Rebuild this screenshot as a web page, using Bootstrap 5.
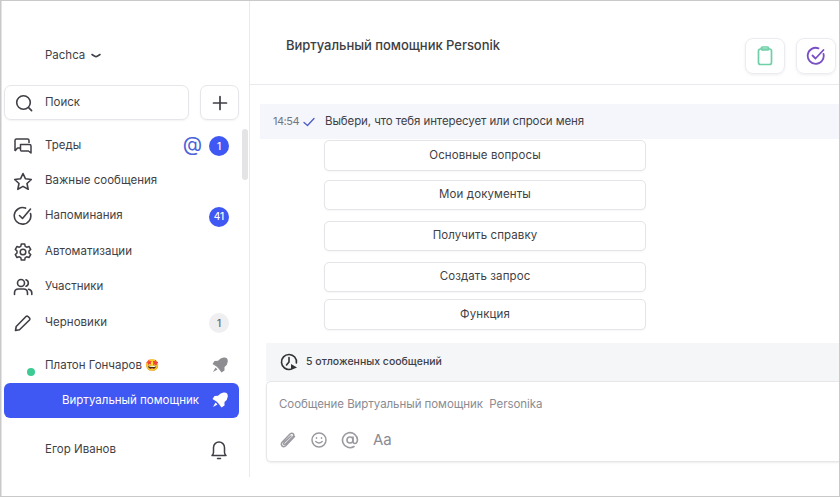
<!DOCTYPE html>
<html lang="ru">
<head>
<meta charset="utf-8">
<title>Pachca</title>
<link href="https://cdn.jsdelivr.net/npm/bootstrap@5.3.0/dist/css/bootstrap.min.css" rel="stylesheet">
<style>
html,body{height:497px;overflow:hidden;background:#fff}
body{font-family:Inter,"Liberation Sans",sans-serif;color:#3f3f46;font-size:12px}
.frame{width:840px;height:497px;border:1px solid #c9c9c9;box-shadow:inset 1px 0 0 #e4e4e4;overflow:hidden}
.side{width:249px;height:476px;border-right:1px solid #e9e9ee;flex:none;padding:0 10px 0 3px;position:relative}
.org{height:84px;padding:46px 0 0 41px;font-size:11.5px;line-height:16px}
.chev{margin:4px 0 0 5px}
.search-box{width:185px;height:35px;border:1px solid #e6e6ea;border-radius:7px;box-shadow:0 1px 2px rgba(0,0,0,.05);font-size:11.5px}
.ico-slot{width:38px;margin-right:3px;flex:none;display:flex;justify-content:center}
.search-box .ico-slot{margin-right:2px}
.add-btn{width:39px;height:35px;border:1px solid #e6e6ea;border-radius:7px;box-shadow:0 1px 2px rgba(0,0,0,.05);margin-left:11px}
.tools{margin-bottom:8px}
.nav-line{height:35.4px;font-size:11.5px;letter-spacing:.02px;padding-right:10px}
.nav-line .lbl{flex:1;margin-top:-1px}
.cnt{width:20px;height:20px;border-radius:50%;background:#3f57f3;color:#fff;font-size:10px;font-weight:500;display:flex;align-items:center;justify-content:center;margin-top:1px}
.cnt.gray{background:#efeff2;color:#666}
.at{color:#4a63d8;font-size:20px;line-height:20px;margin:-3px 7px 0 0;font-weight:400}
.people{margin-top:7px}
.people .lbl{margin-top:1px}
.active-row{height:35px;background:#3f57f3;color:#fff;border-radius:6px;font-size:11.5px;letter-spacing:0;padding-right:10px}
.active-row .lbl{margin:1px 0 0 58px}
.online{position:absolute;left:26px;top:367px;width:8px;height:8px;border-radius:50%;background:#3ecb93}
.main-col{flex:1;min-width:0}
.head{height:84px;border-bottom:1px solid #e9e9ee;padding:36px 3px 0 36px}
.head .ttl{font-size:13px;line-height:18px;font-weight:500;letter-spacing:-.03px;color:#3d3d42;margin-top:-1px;flex:1}
.sq{width:40px;height:36px;border:1px solid #ececf0;border-radius:8px;box-shadow:0 1px 3px rgba(0,0,0,.07);margin-left:11px;margin-top:1px}
.msg{margin:19px 0 0 10px;height:35px;background:#f5f6fb;padding-left:13px;font-size:11.5px;letter-spacing:-.1px}
.tm{color:#75757d;font-size:11px;letter-spacing:-.5px}
.msg svg{margin:0 10px 0 4px}
.opts{margin:1px 0 0 74px;width:322px;color:#3f3f46}
.opt{display:block;width:100%;height:31px;border:1px solid #e4e4e9;border-radius:5px;background:#fff;font-size:11.5px;text-align:center;box-shadow:0 1px 2px rgba(0,0,0,.04);padding:0;color:inherit;letter-spacing:.1px}
.opt-s{height:30px}
.gap-9{margin-top:9px}
.gap-11{margin-top:11px}
.gap-7{margin-top:7px}
.later{margin:13px 0 0 16px;height:38px;background:#f5f6f8;padding-left:14px;font-size:10.5px;font-weight:500;gap:8px}
.composer{margin-left:16px;height:81px;border:1px solid #e7e7ea;border-right:0;border-radius:5px 0 0 5px;box-shadow:0 1px 2px rgba(0,0,0,.08);padding:14px 0 0 12px;background:#fff;color:#8b8b92;font-size:11.5px;letter-spacing:-.06px}
.tool-row{margin-top:18px;gap:13px;height:18px}
.aa{font-size:15px;line-height:18px;margin-left:1px;letter-spacing:0}
.track{position:absolute;right:1px;top:128px;width:6px;height:51px;border-radius:3px;background:#e4e4e6}
.row-last{height:42px;margin-top:9px;padding-top:4px;padding-right:11px}
</style>
</head>
<body>
<div class="frame d-flex">
  <aside class="side">
    <div class="org d-flex align-items-start"><span>Pachca</span>
      <svg class="chev" width="12" height="10" viewBox="0 0 12 10" fill="none" stroke="#3f3f46" stroke-width="1.6" stroke-linecap="round"><path d="M2 3.500c1.500 1 2.700 1.800 4 2.200 1.300-.4 2.500-1.200 4-2.200"/></svg></div>
    <div class="d-flex tools">
      <div class="search-box d-flex align-items-center">
        <span class="ico-slot"><svg width="20" height="20" viewBox="0 0 20 20" fill="none" stroke="#3f3f46" stroke-width="1.6" stroke-linecap="round"><circle cx="9.500" cy="9.500" r="6.800"/><path d="M14.600 14.600l3 3"/></svg></span><span>Поиск</span>
      </div>
      <div class="add-btn d-flex align-items-center justify-content-center"><svg width="16" height="16" viewBox="0 0 16 16" stroke="#3f3f46" stroke-width="1.7" stroke-linecap="round"><path d="M8 1.500v13M1.500 8h13"/></svg></div>
    </div>
    <div class="nav-line d-flex align-items-center">
      <span class="ico-slot"><svg width="20" height="18" viewBox="0 0 20 18" fill="none" stroke="#3f3f46" stroke-width="1.5" stroke-linejoin="round"><path d="M2 14V3.500Q2 2 3.500 2H14.500Q16 2 16 3.500V6M2 14l2.500-3H7"/><path d="M7.500 7.500H16.500Q18 7.500 18 9V16L15.500 14H8.500Q7.500 14 7.500 13Z"/></svg></span>
      <span class="lbl">Треды</span><span class="at">@</span><span class="cnt">1</span>
    </div>
    <div class="nav-line d-flex align-items-center">
      <span class="ico-slot"><svg width="20" height="19" viewBox="0 0 20 19" fill="none" stroke="#3f3f46" stroke-width="1.6" stroke-linejoin="round"><path d="M10 1.500l2.500 5.300 5.800.7-4.300 4 1.200 5.800L10 14.400l-5.200 2.900L6 11.500l-4.300-4 5.800-.7z"/></svg></span>
      <span class="lbl">Важные сообщения</span>
    </div>
    <div class="nav-line d-flex align-items-center">
      <span class="ico-slot"><svg width="20" height="20" viewBox="0 0 20 20" fill="none" stroke="#3f3f46" stroke-width="1.6" stroke-linecap="round" stroke-linejoin="round"><path d="M17.500 7.500A8.300 8.300 0 1 1 12.500 2.100"/><path d="M6.500 9.500l3 3L17.500 3"/></svg></span>
      <span class="lbl">Напоминания</span><span class="cnt">41</span>
    </div>
    <div class="nav-line d-flex align-items-center">
      <span class="ico-slot"><svg width="20" height="20" viewBox="0 0 20 20" fill="none" stroke="#3f3f46" stroke-width="1.5" stroke-linejoin="round"><circle cx="10" cy="10" r="2.800"/><path d="M8.300 2h3.400l.5 2.300 1.500.9 2.300-.7 1.700 2.900-1.700 1.600v2l1.700 1.600-1.700 2.900-2.300-.7-1.500.9-.5 2.300H8.300l-.5-2.300-1.500-.9-2.300.7-1.700-2.900L4 11V9L2.300 7.400 4 4.500l2.300.7 1.500-.9z"/></svg></span>
      <span class="lbl">Автоматизации</span>
    </div>
    <div class="nav-line d-flex align-items-center">
      <span class="ico-slot"><svg width="20" height="18" viewBox="0 0 20 18" fill="none" stroke="#3f3f46" stroke-width="1.6" stroke-linecap="round"><circle cx="8" cy="5" r="3.500"/><path d="M1.500 16.500v-1.500q0-4 4-4h5q4 0 4 4v1.500M13 1.700a3.500 3.500 0 0 1 0 6.600M15.500 11.200q3.300.6 3.300 3.800v1.500"/></svg></span>
      <span class="lbl">Участники</span>
    </div>
    <div class="nav-line d-flex align-items-center">
      <span class="ico-slot"><svg width="18" height="18" viewBox="0 0 18 18" fill="none" stroke="#3f3f46" stroke-width="1.6" stroke-linejoin="round"><path d="M1.500 16.500l.7-4L12 2.500q1-.9 2 0l1.500 1.500q.9 1 0 2L5.500 15.800z"/></svg></span>
      <span class="lbl">Черновики</span><span class="cnt gray">1</span>
    </div>
    <div class="people nav-line d-flex align-items-center">
      <span class="ico-slot"></span>
      <span class="lbl">Платон Гончаров 🤩</span>
      <svg width="18" height="18" viewBox="0 0 18 18" fill="#8e8e92"><path d="M12.500 1.500Q17 1 16.800 5.500 16.500 9 13.500 11L13.500 14.500 10.500 16.500 7.500 12.500 5.500 10.500 1.500 8 3.500 5 7 4.700Q9.500 2 12.500 1.500Z"/><path d="M4.500 11.500L2 16 6.500 13.500Z"/></svg>
    </div>
    <div class="active-row d-flex align-items-center">
      <span class="lbl flex-grow-1">Виртуальный помощник</span>
      <svg width="18" height="18" viewBox="0 0 18 18" fill="#fff"><path d="M12.500 1.500Q17 1 16.800 5.500 16.500 9 13.500 11L13.500 14.500 10.500 16.500 7.500 12.500 5.500 10.500 1.500 8 3.500 5 7 4.700Q9.500 2 12.500 1.500Z"/><path d="M4.500 11.500L2 16 6.500 13.500Z"/></svg>
    </div>
    <div class="nav-line row-last d-flex align-items-center">
      <span class="ico-slot"></span>
      <span class="lbl">Егор Иванов</span>
      <svg width="18" height="20" viewBox="0 0 18 20" fill="none" stroke="#3f3f46" stroke-width="1.500" stroke-linecap="round" stroke-linejoin="round"><path d="M2 15.500h14q-1.500-1.500-1.500-3V7.500a5.500 5.500 0 0 0-11 0v5q0 1.500-1.500 3zM7.500 18.500h3"/></svg>
    </div>
    <span class="online"></span>
    <span class="track"></span>
  </aside>
  <main class="main-col">
    <div class="head d-flex align-items-start">
      <div class="ttl">Виртуальный помощник Personik</div>
      <div class="sq d-flex align-items-center justify-content-center"><svg width="16" height="20" viewBox="0 0 16 20" fill="none" stroke="#6fd0a8" stroke-width="1.700" stroke-linejoin="round"><rect x="1.500" y="3" width="13" height="15.500" rx="2"/><rect x="4.500" y="1" width="7" height="3" rx="1"/></svg></div>
      <div class="sq d-flex align-items-center justify-content-center"><svg width="20" height="20" viewBox="0 0 20 20" fill="none" stroke="#7a4fc4" stroke-width="1.800" stroke-linecap="round" stroke-linejoin="round"><path d="M17.500 8A8 8 0 1 1 12.500 2.300"/><path d="M6.500 9.500l3 3 8-8.500"/></svg></div>
    </div>
    <div class="msg d-flex align-items-center">
      <span class="tm">14:54</span>
      <svg width="12" height="10" viewBox="0 0 12 10" fill="none" stroke="#4a5bc4" stroke-width="1.300" stroke-linecap="round" stroke-linejoin="round"><path d="M1 5.500l3.500 3L11 1.500"/></svg>
      <span>Выбери, что тебя интересует или спроси меня</span>
    </div>
    <div class="opts">
      <button class="opt" type="button">Основные вопросы</button>
      <button class="opt opt-s gap-9" type="button">Мои документы</button>
      <button class="opt gap-11 opt-s" type="button">Получить справку</button>
      <button class="opt gap-11 opt-s" type="button">Создать запрос</button>
      <button class="opt gap-7" type="button">Функция</button>
    </div>
    <div class="later d-flex align-items-center">
      <svg width="18" height="18" viewBox="0 0 18 18" fill="none" stroke="#333" stroke-width="1.600" stroke-linecap="round"><path d="M10.500 16.300A7.500 7.500 0 1 1 16.400 10"/><path d="M9 4.500V9l-2.500 3"/><path d="M11 11l6 3.500-6 2.500z" fill="#333" stroke="none"/></svg>
      <span>5 отложенных сообщений</span>
    </div>
    <div class="composer">
      <div>Сообщение Виртуальный помощник&nbsp; Personika</div>
      <div class="tool-row d-flex align-items-center">
        <svg width="18" height="18" viewBox="0 0 18 18" fill="none" stroke="#9a9aa0" stroke-width="1.500" stroke-linecap="round"><path d="M15.500 5.500L7 14.500q-2 2-4 .4-1.500-1.800.3-3.800L11 3q1.700-1.500 3.200-.3 1.300 1.500-.2 3.200L6.500 13q-1 .8-1.700.2-.6-.8.3-1.800L12 5"/></svg>
        <svg width="18" height="18" viewBox="0 0 18 18" fill="none" stroke="#9a9aa0" stroke-width="1.500" stroke-linecap="round"><circle cx="9" cy="9" r="7"/><path d="M5.800 10.500q3.200 3 6.400 0M6.500 6.800v.5M11.500 6.800v.5"/></svg>
        <svg width="18" height="18" viewBox="0 0 18 18" fill="none" stroke="#9a9aa0" stroke-width="1.600" stroke-linecap="round"><circle cx="9" cy="9" r="3"/><path d="M12 6v4.500q0 2 2 2t2.500-3.500A7.500 7.500 0 1 0 13 15.500"/></svg>
        <span class="aa">Aa</span>
      </div>
    </div>
  </main>
</div>
</body>
</html>
